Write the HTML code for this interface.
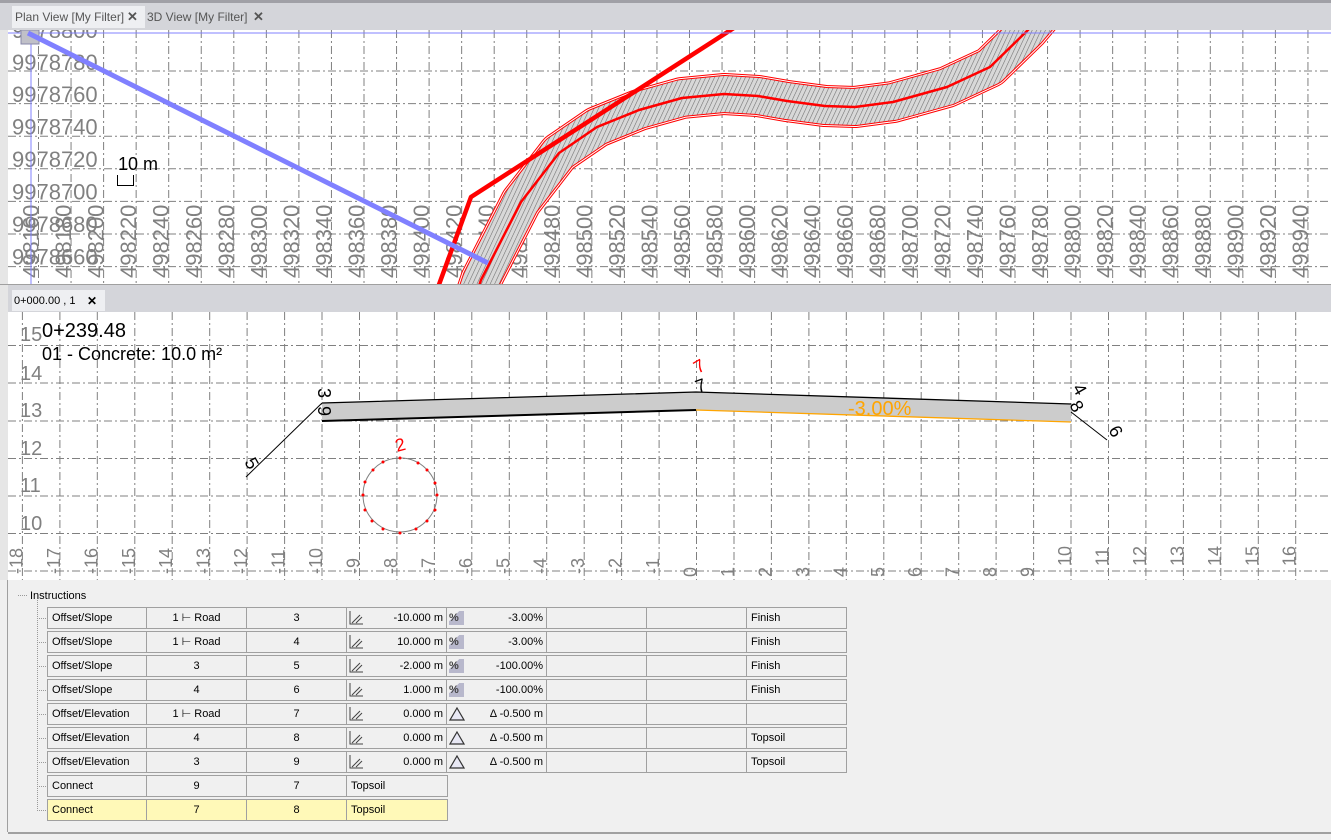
<!DOCTYPE html>
<html><head><meta charset="utf-8"><style>
body{margin:0;width:1331px;height:840px;overflow:hidden;background:#f0f0f0;font-family:"Liberation Sans",sans-serif;position:relative}
svg{position:absolute;left:0;top:0}
.panel{position:absolute;left:8px;top:580px;width:1323px;height:252px;background:#f0f0f0;border-bottom:2px solid #a0a0a0}
.row{position:absolute;left:47px;height:20px;display:flex;border:1px solid #a0a0a0;background:#f0f0f0;font-size:11px;line-height:21px;color:#000}
.row div{border-right:1px solid #a0a0a0;box-sizing:border-box;height:20px;position:relative;white-space:nowrap}
.row div:last-child{border-right:none}
.c1{width:99px;padding-left:4px}
.c2,.c3{width:100px;text-align:center}
.c4,.c5{width:100px;text-align:right;padding-right:3px}
.c6,.c7{width:100px}
.c8{width:99px;padding-left:4px}
.ct{width:100px;padding-left:4px}
.sl{position:absolute;left:2px;top:3px;width:14px;height:14px}
.pc{position:absolute;left:2px;top:3px;width:15px;height:14px;background:linear-gradient(135deg,#f0f0f0 35%,#b8b8cc 36%);font-size:11px;line-height:14px;text-align:left;font-weight:bold;color:#444}
.tri{position:absolute;left:2px;top:3px;width:16px;height:14px}
.y{background:#fff9b8}
</style></head><body>
<svg width="1331" height="580" viewBox="0 0 1331 580" font-family="Liberation Sans, sans-serif">
<defs>
<clipPath id="pc"><rect x="8" y="30" width="1323" height="254"/></clipPath>
<clipPath id="cc"><rect x="8" y="312" width="1323" height="268"/></clipPath>
<pattern id="h" width="4" height="4" patternUnits="userSpaceOnUse" patternTransform="rotate(25)"><rect width="4" height="4" fill="#d8d8d8"/><line x1="0" y1="0" x2="0" y2="4" stroke="#6e6e6e" stroke-width="1.1"/></pattern>
<path id="cl" d="M476,295 L481,280 L521,202 L559,153 L597,127 L639,110 L682,98 L724,94 L758,96 L787,101 L825,106 L855,107 L893,102 L947,87 L990,67 L1028,30 L1045,10"/>
</defs>
<rect x="0" y="0" width="1331" height="580" fill="#d4d5da"/>
<rect x="0" y="0" width="1331" height="3" fill="#a0a0a6"/>
<rect x="0" y="30" width="8" height="550" fill="#e6e6e6"/>
<rect x="12" y="6" width="133" height="22" fill="#eeeff2"/>
<text x="15" y="21" font-size="12" fill="#555">Plan View [My Filter]</text>
<text x="127" y="21" font-size="13" font-weight="bold" fill="#555">✕</text>
<text x="147" y="21" font-size="12" fill="#555">3D View [My Filter]</text>
<text x="253" y="21" font-size="13" font-weight="bold" fill="#555">✕</text>
<rect x="8" y="30" width="1323" height="254" fill="#fff"/>
<g clip-path="url(#pc)">
<g stroke="#808080" stroke-width="1" stroke-dasharray="8,3,2,3" fill="none">
<path d="M38.5 30V284M71.05 30V284M103.6 30V284M136.15 30V284M168.7 30V284M201.25 30V284M233.8 30V284M266.35 30V284M298.9 30V284M331.45 30V284M364 30V284M396.55 30V284M429.1 30V284M461.65 30V284M494.2 30V284M526.75 30V284M559.3 30V284M591.85 30V284M624.4 30V284M656.95 30V284M689.5 30V284M722.05 30V284M754.6 30V284M787.15 30V284M819.7 30V284M852.25 30V284M884.8 30V284M917.35 30V284M949.9 30V284M982.45 30V284M1015 30V284M1047.55 30V284M1080.1 30V284M1112.65 30V284M1145.2 30V284M1177.75 30V284M1210.3 30V284M1242.85 30V284M1275.4 30V284M1307.95 30V284"/>
<path d="M8 71H1331M8 103.6H1331M8 136.2H1331M8 168.8H1331M8 201.4H1331M8 234H1331M8 266.6H1331"/>
</g>
<g font-size="22" fill="#808080">
<text x="12" y="38">9978800</text><text x="12" y="70">9978780</text><text x="12" y="102">9978760</text><text x="12" y="134.5">9978740</text><text x="12" y="167">9978720</text><text x="12" y="199.5">9978700</text><text x="12" y="232">9978680</text><text x="12" y="264.5">9978660</text>
<text transform="translate(38.5,278) rotate(-90)">498160</text>
<text transform="translate(71.05,278) rotate(-90)">498180</text>
<text transform="translate(103.6,278) rotate(-90)">498200</text>
<text transform="translate(136.15,278) rotate(-90)">498220</text>
<text transform="translate(168.7,278) rotate(-90)">498240</text>
<text transform="translate(201.25,278) rotate(-90)">498260</text>
<text transform="translate(233.8,278) rotate(-90)">498280</text>
<text transform="translate(266.35,278) rotate(-90)">498300</text>
<text transform="translate(298.9,278) rotate(-90)">498320</text>
<text transform="translate(331.45,278) rotate(-90)">498340</text>
<text transform="translate(364,278) rotate(-90)">498360</text>
<text transform="translate(396.55,278) rotate(-90)">498380</text>
<text transform="translate(429.1,278) rotate(-90)">498400</text>
<text transform="translate(461.65,278) rotate(-90)">498420</text>
<text transform="translate(494.2,278) rotate(-90)">498440</text>
<text transform="translate(526.75,278) rotate(-90)">498460</text>
<text transform="translate(559.3,278) rotate(-90)">498480</text>
<text transform="translate(591.85,278) rotate(-90)">498500</text>
<text transform="translate(624.4,278) rotate(-90)">498520</text>
<text transform="translate(656.95,278) rotate(-90)">498540</text>
<text transform="translate(689.5,278) rotate(-90)">498560</text>
<text transform="translate(722.05,278) rotate(-90)">498580</text>
<text transform="translate(754.6,278) rotate(-90)">498600</text>
<text transform="translate(787.15,278) rotate(-90)">498620</text>
<text transform="translate(819.7,278) rotate(-90)">498640</text>
<text transform="translate(852.25,278) rotate(-90)">498660</text>
<text transform="translate(884.8,278) rotate(-90)">498680</text>
<text transform="translate(917.35,278) rotate(-90)">498700</text>
<text transform="translate(949.9,278) rotate(-90)">498720</text>
<text transform="translate(982.45,278) rotate(-90)">498740</text>
<text transform="translate(1015,278) rotate(-90)">498760</text>
<text transform="translate(1047.55,278) rotate(-90)">498780</text>
<text transform="translate(1080.1,278) rotate(-90)">498800</text>
<text transform="translate(1112.65,278) rotate(-90)">498820</text>
<text transform="translate(1145.2,278) rotate(-90)">498840</text>
<text transform="translate(1177.75,278) rotate(-90)">498860</text>
<text transform="translate(1210.3,278) rotate(-90)">498880</text>
<text transform="translate(1242.85,278) rotate(-90)">498900</text>
<text transform="translate(1275.4,278) rotate(-90)">498920</text>
<text transform="translate(1307.95,278) rotate(-90)">498940</text>
</g>
<g fill="none" stroke-linejoin="round" stroke-linecap="butt">
<use href="#cl" stroke="#f00" stroke-width="42"/>
<use href="#cl" stroke="#fff" stroke-width="40"/>
<use href="#cl" stroke="#f00" stroke-width="38"/>
<use href="#cl" stroke="url(#h)" stroke-width="36"/>
<use href="#cl" stroke="#f00" stroke-width="2.5"/>
<path d="M437,290 L471,197 L740,24" stroke="#f00" stroke-width="4.5"/>
</g>
<path d="M8 33H1331M31 30V284" stroke="#8080ff" stroke-width="1"/>
<rect x="21" y="30" width="18" height="14" fill="#c0c0c8" stroke="#8888aa"/>
<line x1="28" y1="33" x2="488" y2="263" stroke="#8080ff" stroke-width="5"/>
<text x="118" y="170" font-size="18" fill="#000">10 m</text>
<path d="M117.5 175V185.5H133.5V175" stroke="#000" fill="none"/>
</g>
<line x1="0" y1="284.5" x2="1331" y2="284.5" stroke="#a0a0a0"/>
<rect x="12" y="290" width="93" height="21" fill="#eeeff2"/>
<text x="14" y="304" font-size="11" fill="#000">0+000.00 , 1</text>
<text x="87" y="305" font-size="12" font-weight="bold" fill="#000">✕</text>
<rect x="8" y="312" width="1323" height="268" fill="#fff"/>
<g clip-path="url(#cc)">
<g stroke="#808080" stroke-width="1" stroke-dasharray="8,3,2,3" fill="none">
<path d="M22.4 312V580M59.9 312V580M97.3 312V580M134.8 312V580M172.2 312V580M209.7 312V580M247.1 312V580M284.6 312V580M322 312V580M359.5 312V580M396.9 312V580M434.4 312V580M471.8 312V580M509.3 312V580M546.7 312V580M584.2 312V580M621.6 312V580M659.1 312V580M696.5 312V580M734 312V580M771.4 312V580M808.9 312V580M846.3 312V580M883.8 312V580M921.2 312V580M958.7 312V580M996.1 312V580M1033.6 312V580M1071 312V580M1108.5 312V580M1145.9 312V580M1183.4 312V580M1220.8 312V580M1258.3 312V580M1295.7 312V580"/>
<path d="M8 345.5H1331M8 383H1331M8 421H1331M8 458.5H1331M8 496H1331M8 533.5H1331M8 571H1331"/>
</g>
<g font-size="20" fill="#808080">
<text x="20" y="341">15</text><text x="20" y="380">14</text><text x="20" y="417">13</text><text x="20" y="455">12</text><text x="20" y="492">11</text><text x="20" y="530">10</text>
</g>
<g font-size="18" fill="#808080">
<text transform="translate(22.4,574) rotate(-90)">-18</text>
<text transform="translate(59.9,574) rotate(-90)">-17</text>
<text transform="translate(97.3,574) rotate(-90)">-16</text>
<text transform="translate(134.8,574) rotate(-90)">-15</text>
<text transform="translate(172.2,574) rotate(-90)">-14</text>
<text transform="translate(209.7,574) rotate(-90)">-13</text>
<text transform="translate(247.1,574) rotate(-90)">-12</text>
<text transform="translate(284.6,574) rotate(-90)">-11</text>
<text transform="translate(322,574) rotate(-90)">-10</text>
<text transform="translate(359.5,574) rotate(-90)">-9</text>
<text transform="translate(396.9,574) rotate(-90)">-8</text>
<text transform="translate(434.4,574) rotate(-90)">-7</text>
<text transform="translate(471.8,574) rotate(-90)">-6</text>
<text transform="translate(509.3,574) rotate(-90)">-5</text>
<text transform="translate(546.7,574) rotate(-90)">-4</text>
<text transform="translate(584.2,574) rotate(-90)">-3</text>
<text transform="translate(621.6,574) rotate(-90)">-2</text>
<text transform="translate(659.1,574) rotate(-90)">-1</text>
<text transform="translate(696.5,577) rotate(-90)">0</text>
<text transform="translate(734,577) rotate(-90)">1</text>
<text transform="translate(771.4,577) rotate(-90)">2</text>
<text transform="translate(808.9,577) rotate(-90)">3</text>
<text transform="translate(846.3,577) rotate(-90)">4</text>
<text transform="translate(883.8,577) rotate(-90)">5</text>
<text transform="translate(921.2,577) rotate(-90)">6</text>
<text transform="translate(958.7,577) rotate(-90)">7</text>
<text transform="translate(996.1,577) rotate(-90)">8</text>
<text transform="translate(1033.6,577) rotate(-90)">9</text>
<text transform="translate(1071,566) rotate(-90)">10</text>
<text transform="translate(1108.5,566) rotate(-90)">11</text>
<text transform="translate(1145.9,566) rotate(-90)">12</text>
<text transform="translate(1183.4,566) rotate(-90)">13</text>
<text transform="translate(1220.8,566) rotate(-90)">14</text>
<text transform="translate(1258.3,566) rotate(-90)">15</text>
<text transform="translate(1295.7,566) rotate(-90)">16</text>
</g>
<text x="42" y="337" font-size="20" fill="#000">0+239.48</text>
<text x="42" y="360" font-size="18" fill="#000">01 - Concrete: 10.0 m²</text>
<polygon points="322,403 696,392 1071,404 1071,422 696,410 322,421" fill="#cccccc"/>
<path d="M322,403 L696,392 L1071,404" stroke="#000" stroke-width="1.3" fill="none"/>
<path d="M322,421 L696,410" stroke="#000" stroke-width="2" fill="none"/>
<path d="M696,410 L1071,422" stroke="#ffa500" stroke-width="1.3" fill="none"/>
<line x1="322" y1="403" x2="246" y2="477" stroke="#000" stroke-width="1"/>
<line x1="1071" y1="412" x2="1107" y2="440" stroke="#000" stroke-width="1"/>
<text x="848" y="415" font-size="20" fill="#ffa500">-3.00%</text>
<g font-size="18" fill="#000">
<text transform="translate(318,388) rotate(90)">3</text>
<text transform="translate(318,406) rotate(90)">9</text>
<text transform="translate(244,462) rotate(60)">5</text>
<text transform="translate(1072,388) rotate(60)">4</text>
<text transform="translate(1069,405) rotate(60)">8</text>
<text transform="translate(1108,430) rotate(60)">6</text>
<text transform="translate(698,393) rotate(-20)">7</text>
</g>
<text transform="translate(698,374) rotate(-30)" font-size="18" fill="#f00">7</text>
<circle cx="400" cy="495" r="37" fill="none" stroke="#808080" stroke-width="1"/>
<g fill="#f00">
<circle cx="400" cy="458" r="1.5"/><circle cx="418" cy="463" r="1.5"/><circle cx="427" cy="470" r="1.5"/><circle cx="435" cy="483" r="1.5"/><circle cx="437" cy="495" r="1.5"/><circle cx="435" cy="510" r="1.5"/><circle cx="427" cy="521" r="1.5"/><circle cx="416" cy="529" r="1.5"/><circle cx="400" cy="533" r="1.5"/><circle cx="383" cy="529" r="1.5"/><circle cx="372" cy="521" r="1.5"/><circle cx="365" cy="510" r="1.5"/><circle cx="363" cy="495" r="1.5"/><circle cx="365" cy="482" r="1.5"/><circle cx="373" cy="470" r="1.5"/><circle cx="383" cy="462" r="1.5"/>
</g>
<text transform="translate(397,452) rotate(-15)" font-size="18" fill="#f00">2</text>
</g>
</svg>
<div class="panel">
<div style="position:absolute;left:-1px;top:0;width:1px;height:252px;background:#a0a0a0"></div>
</div>
<svg width="1331" height="840" viewBox="0 0 1331 840" style="pointer-events:none">
<path d="M18 595.5H28M37.5 600V810M37 618.5H47M37 642.5H47M37 666.5H47M37 690.5H47M37 714.5H47M37 738.5H47M37 762.5H47M37 786.5H47M37 810.5H47" stroke="#999" stroke-dasharray="1,1" fill="none"/>
<text x="30" y="599" font-size="11" fill="#000" font-family="Liberation Sans, sans-serif">Instructions</text>
</svg>
<div class="row" style="top:607px"><div class="c1">Offset/Slope</div><div class="c2">1 ⊢ Road</div><div class="c3">3</div><div class="c4"><svg class="sl" viewBox="0 0 14 14"><path d="M1 0V13H14M3 12L11 4M7 12L13 6" stroke="#444" fill="none"/></svg>-10.000 m</div><div class="c5"><span class="pc">%</span>-3.00%</div><div class="c6"></div><div class="c7"></div><div class="c8">Finish</div></div>
<div class="row" style="top:631px"><div class="c1">Offset/Slope</div><div class="c2">1 ⊢ Road</div><div class="c3">4</div><div class="c4"><svg class="sl" viewBox="0 0 14 14"><path d="M1 0V13H14M3 12L11 4M7 12L13 6" stroke="#444" fill="none"/></svg>10.000 m</div><div class="c5"><span class="pc">%</span>-3.00%</div><div class="c6"></div><div class="c7"></div><div class="c8">Finish</div></div>
<div class="row" style="top:655px"><div class="c1">Offset/Slope</div><div class="c2">3</div><div class="c3">5</div><div class="c4"><svg class="sl" viewBox="0 0 14 14"><path d="M1 0V13H14M3 12L11 4M7 12L13 6" stroke="#444" fill="none"/></svg>-2.000 m</div><div class="c5"><span class="pc">%</span>-100.00%</div><div class="c6"></div><div class="c7"></div><div class="c8">Finish</div></div>
<div class="row" style="top:679px"><div class="c1">Offset/Slope</div><div class="c2">4</div><div class="c3">6</div><div class="c4"><svg class="sl" viewBox="0 0 14 14"><path d="M1 0V13H14M3 12L11 4M7 12L13 6" stroke="#444" fill="none"/></svg>1.000 m</div><div class="c5"><span class="pc">%</span>-100.00%</div><div class="c6"></div><div class="c7"></div><div class="c8">Finish</div></div>
<div class="row" style="top:703px"><div class="c1">Offset/Elevation</div><div class="c2">1 ⊢ Road</div><div class="c3">7</div><div class="c4"><svg class="sl" viewBox="0 0 14 14"><path d="M1 0V13H14M3 12L11 4M7 12L13 6" stroke="#444" fill="none"/></svg>0.000 m</div><div class="c5"><svg class="tri" viewBox="0 0 16 14"><path d="M8 1L15 13H1Z" stroke="#333" fill="#e8e8f4" stroke-width="1.2"/></svg>Δ -0.500 m</div><div class="c6"></div><div class="c7"></div><div class="c8"></div></div>
<div class="row" style="top:727px"><div class="c1">Offset/Elevation</div><div class="c2">4</div><div class="c3">8</div><div class="c4"><svg class="sl" viewBox="0 0 14 14"><path d="M1 0V13H14M3 12L11 4M7 12L13 6" stroke="#444" fill="none"/></svg>0.000 m</div><div class="c5"><svg class="tri" viewBox="0 0 16 14"><path d="M8 1L15 13H1Z" stroke="#333" fill="#e8e8f4" stroke-width="1.2"/></svg>Δ -0.500 m</div><div class="c6"></div><div class="c7"></div><div class="c8">Topsoil</div></div>
<div class="row" style="top:751px"><div class="c1">Offset/Elevation</div><div class="c2">3</div><div class="c3">9</div><div class="c4"><svg class="sl" viewBox="0 0 14 14"><path d="M1 0V13H14M3 12L11 4M7 12L13 6" stroke="#444" fill="none"/></svg>0.000 m</div><div class="c5"><svg class="tri" viewBox="0 0 16 14"><path d="M8 1L15 13H1Z" stroke="#333" fill="#e8e8f4" stroke-width="1.2"/></svg>Δ -0.500 m</div><div class="c6"></div><div class="c7"></div><div class="c8">Topsoil</div></div>
<div class="row" style="top:775px"><div class="c1">Connect</div><div class="c2">9</div><div class="c3">7</div><div class="ct">Topsoil</div></div>
<div class="row y" style="top:799px"><div class="c1">Connect</div><div class="c2">7</div><div class="c3">8</div><div class="ct">Topsoil</div></div>
</body></html>
